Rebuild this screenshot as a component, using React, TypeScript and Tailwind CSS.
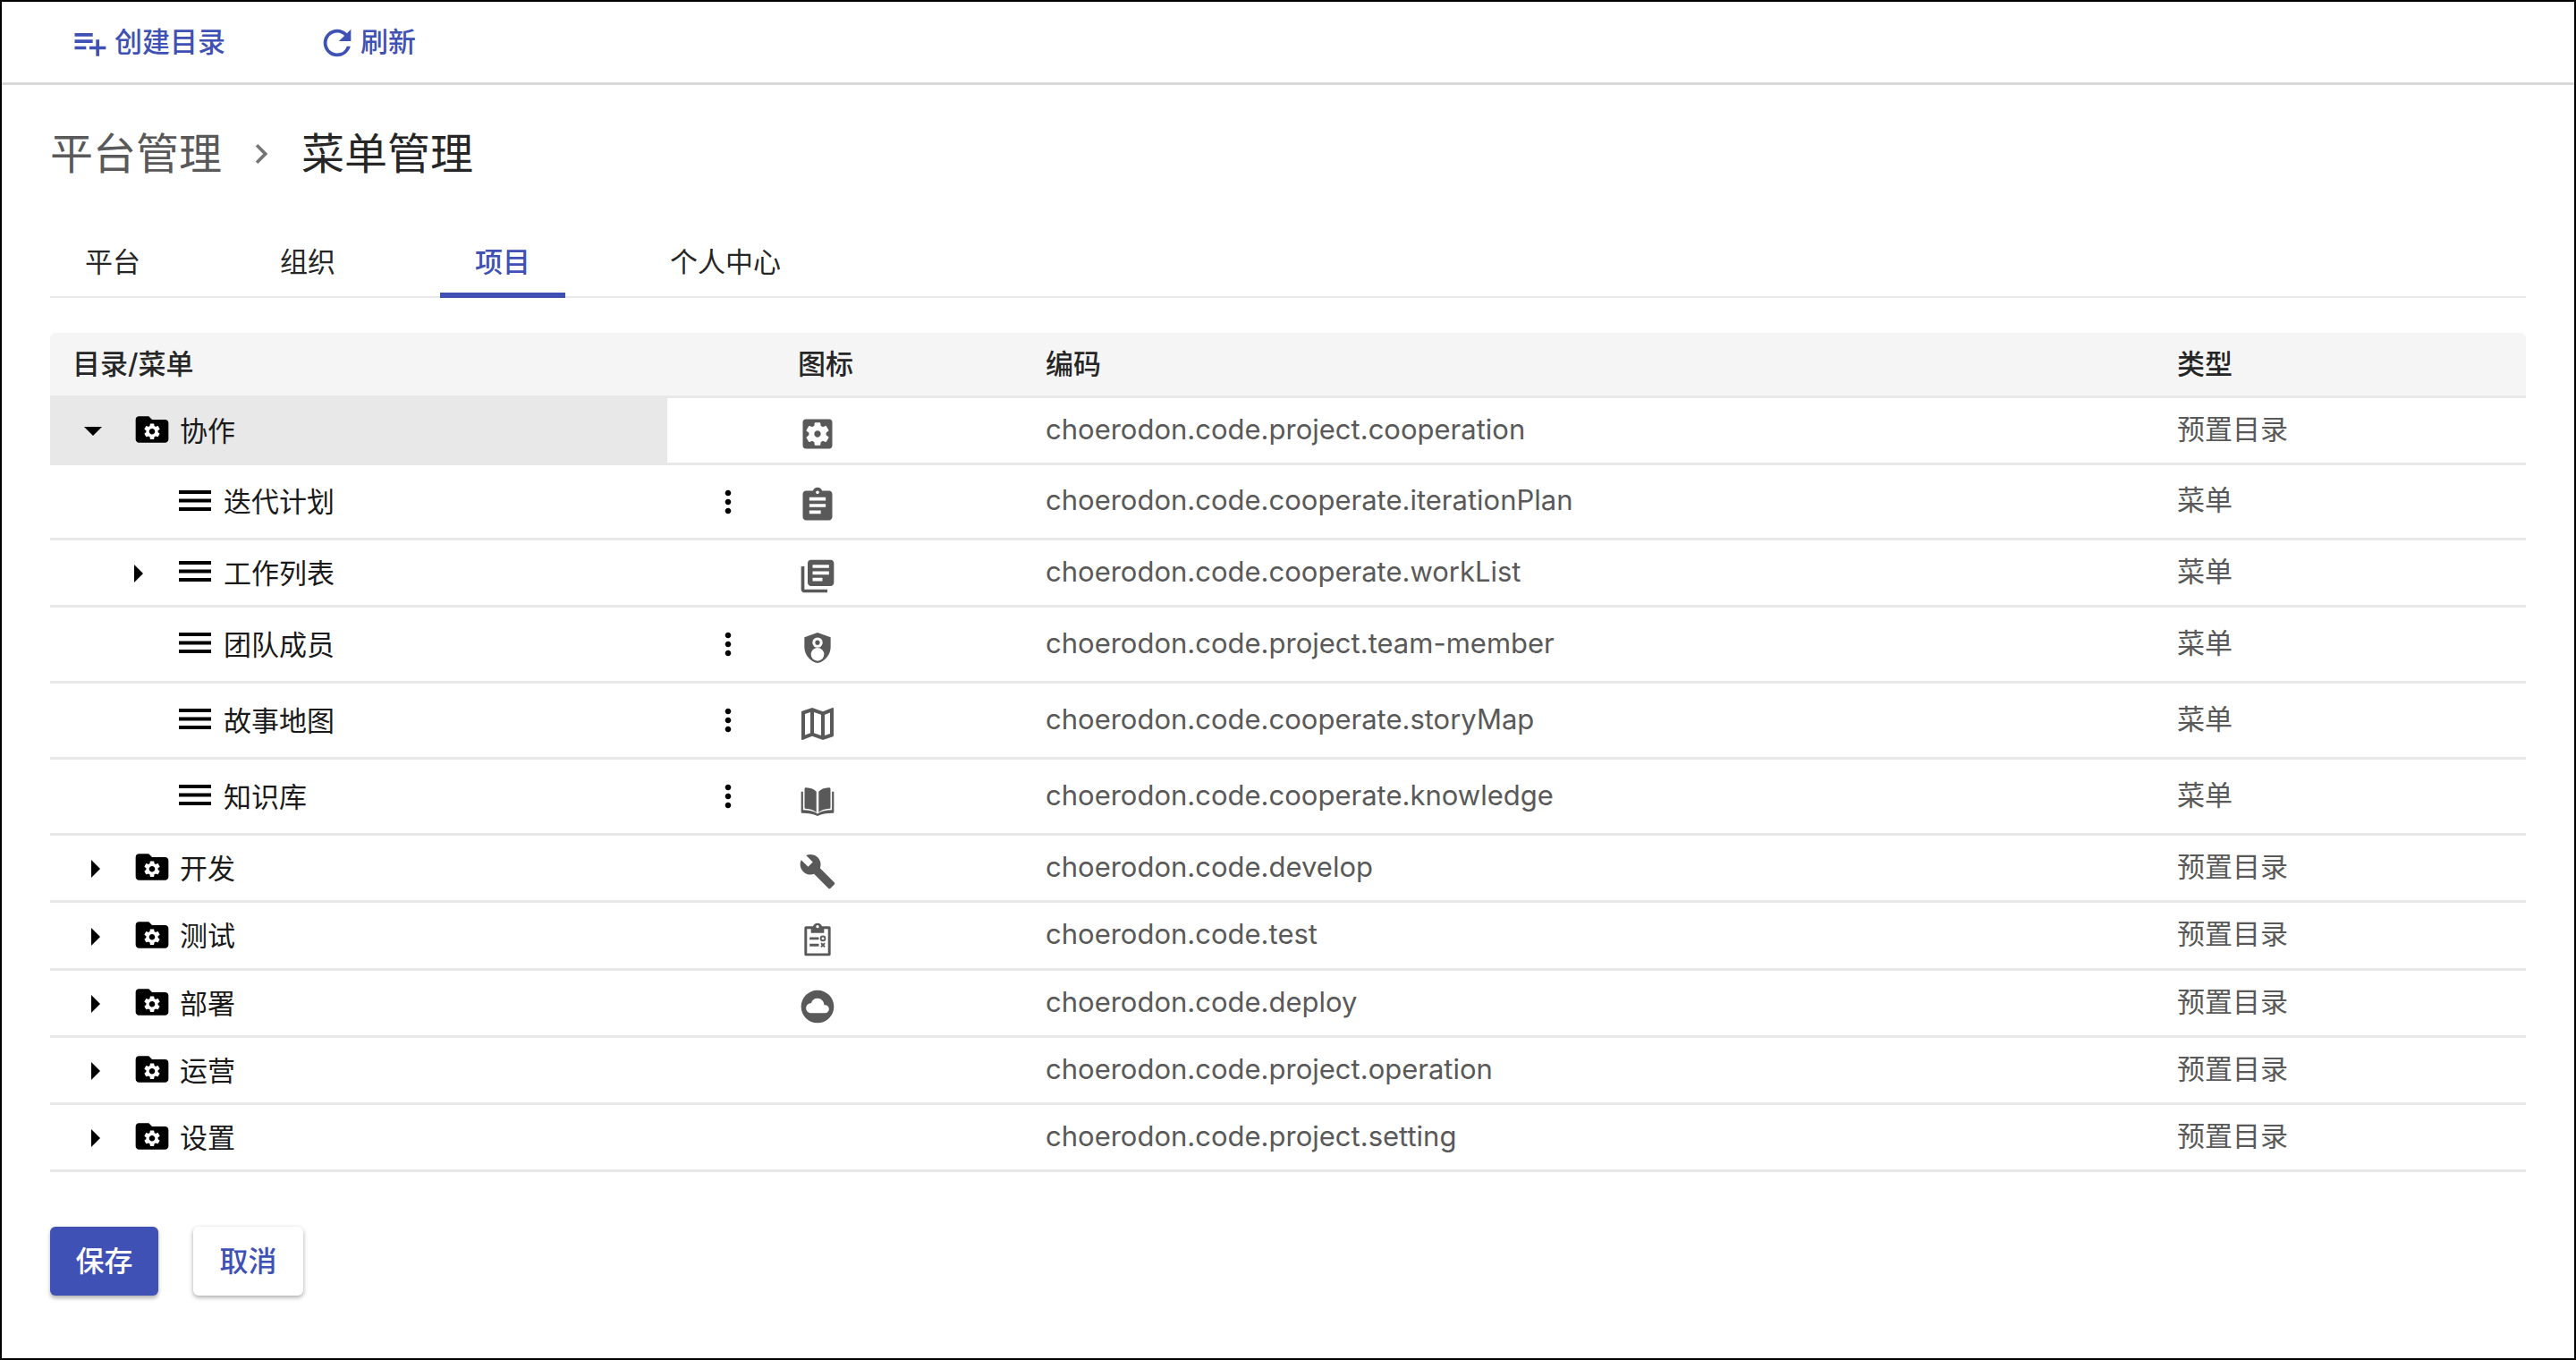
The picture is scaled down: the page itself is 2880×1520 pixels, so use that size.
import type { ReactNode } from 'react';
import {
  MdArrowDropDown,
  MdArrowRight,
  MdAssignment,
  MdBuild,
  MdChevronRight,
  MdCloudCircle,
  MdLibraryBooks,
  MdMoreVert,
  MdOutlineMap,
  MdPlaylistAdd,
  MdRefresh,
  MdSettingsApplications,
} from 'react-icons/md';

const GEAR =
  'M19.14 12.94c.04-.3.06-.61.06-.94 0-.32-.02-.64-.07-.94l2.03-1.58c.18-.14.23-.41.12-.61l-1.92-3.32c-.12-.22-.37-.29-.59-.22l-2.39.96c-.5-.38-1.03-.7-1.62-.94l-.36-2.54c-.04-.24-.24-.41-.48-.41h-3.84c-.24 0-.43.17-.47.41l-.36 2.54c-.59.24-1.13.57-1.62.94l-2.39-.96c-.22-.08-.47 0-.59.22L2.74 8.87c-.12.21-.08.47.12.61l2.03 1.58c-.05.3-.09.63-.09.94s.02.64.07.94l-2.03 1.58c-.18.14-.23.41-.12.61l1.92 3.32c.12.22.37.29.59.22l2.39-.96c.5.38 1.03.7 1.62.94l.36 2.54c.05.24.24.41.48.41h3.84c.24 0 .44-.17.47-.41l.36-2.54c.59-.24 1.13-.56 1.62-.94l2.39.96c.22.08.47 0 .59-.22l1.92-3.32c.12-.22.07-.47-.12-.61l-2.01-1.58zM12 15.6c-1.98 0-3.6-1.62-3.6-3.6s1.62-3.6 3.6-3.6 3.6 1.62 3.6 3.6-1.62 3.6-3.6 3.6z';

const FolderGear = () => (
  <svg viewBox="0 0 24 24" className="w-[44px] h-[44px] shrink-0 text-black -mt-[2px]">
    <path fill="currentColor" d="M10 4H4c-1.100 0-2 .9-2 2v12c0 1.100.9 2 2 2h16c1.100 0 2-.9 2-2V8c0-1.100-.9-2-2-2h-8l-2-2z" />
    <path fill="#fff" transform="translate(12 13.2) scale(.5) translate(-12 -12)" d={GEAR} />
  </svg>
);

const MenuLines = () => (
  <svg viewBox="0 0 36 23" className="w-[36px] h-[23px] text-black">
    <rect y="0" width="36" height="4" fill="currentColor" />
    <rect y="9.500" width="36" height="4" fill="currentColor" />
    <rect y="19" width="36" height="4" fill="currentColor" />
  </svg>
);

const ShieldPerson = () => (
  <svg viewBox="0 0 24 24" className="w-[44px] h-[44px]">
    <path fill="#595959" d="M12 2.700 4 5.600v5.800c0 4.700 3.300 8.900 8 9.900 4.700-1 8-5.200 8-9.900V5.600l-8-2.900z" />
    <circle cx="12" cy="8.800" r="3.100" fill="#fff" />
    <circle cx="12" cy="8.800" r="1.400" fill="#595959" />
    <circle cx="12" cy="16" r="4" fill="#fff" />
  </svg>
);

const ClipboardTest = () => (
  <svg viewBox="0 0 24 24" className="w-[44px] h-[44px]" fill="none">
    <path fill="#595959" d="M19 4h-4.200C14.400 2.800 13.300 2 12 2s-2.400.8-2.800 2H5c-.6 0-1 .4-1 1v16c0 .6.400 1 1 1h14c.6 0 1-.4 1-1V5c0-.6-.4-1-1-1zM12 3.300c.5 0 .9.400.9.900s-.4.900-.9.900-.9-.4-.9-.9.400-.9.900-.9zM18.400 20.400H5.600V5.600H8V8h8V5.600h2.400v14.800z" />
    <path fill="#595959" d="M7.200 10.600h5.600v1.600H7.200zM7.200 14.600h5.600v1.600H7.200z" />
    <circle cx="15.300" cy="11.400" r="1.300" stroke="#595959" strokeWidth="1" />
    <path stroke="#595959" strokeWidth="1" d="m14.200 14.300 2.200 2.200m0-2.200-2.200 2.200" />
  </svg>
);

const OpenBook = () => (
  <svg viewBox="0 0 24 24" className="w-[44px] h-[44px]" fill="#595959">
    <path d="M11.300 7C10 5.500 7.900 4.600 5 4.500c-.5 0-.9.300-.9.800v11.300c0 .4.300.7.700.7 2.800.1 5 .9 6.500 2.300V7zM12.700 7c1.300-1.500 3.400-2.400 6.300-2.500.5 0 .9.300.9.800v11.300c0 .4-.3.700-.7.700-2.800.1-5 .9-6.500 2.300V7z" />
    <path d="M2 7h1.200v11.200c3.600 0 6.600.7 8.800 2.200 2.200-1.500 5.200-2.200 8.800-2.200V7H22v12.300c0 .4-.3.700-.7.700-3.700 0-6.700.4-9.300 1.800C9.400 20.400 6.400 20 2.700 20c-.4 0-.7-.3-.7-.7V7z" />
  </svg>
);

const TreeRow = ({ label, level, open, arrow, height, more, icon, code, type }: {
  label: string;
  level: number;
  open?: boolean;
  arrow?: boolean;
  height: string;
  more?: boolean;
  icon?: ReactNode;
  code: string;
  type: string;
}) => (
  <div className={`grid grid-cols-[690px_146px_277px_1265px_1fr] items-stretch border-b-[3px] border-[#e8e8e8] ${height}`}>
    <div className={`flex items-center text-[31px] text-[#1a1a1a] ${open ? 'bg-[#e8e8e8]' : ''} ${level === 0 ? 'pl-[24px]' : 'pl-[74px]'}`}>
      <span className="w-[48px] h-[48px] shrink-0 text-black">
        {arrow && (open
          ? <MdArrowDropDown className="w-[48px] h-[48px]" />
          : <MdArrowRight className={`w-[48px] h-[48px] mt-[1px] ${level === 0 ? 'ml-[2px]' : ''}`} />)}
      </span>
      {level === 0 ? (
        <span className="ml-[20px] mr-[9px] flex items-center"><FolderGear /></span>
      ) : (
        <span className="ml-[22px] mr-[14px] flex items-center -mt-[3px]"><MenuLines /></span>
      )}
      <span className="mt-[2px]">{label}</span>
    </div>
    <div className="flex items-center pl-[48px]">
      {more && <MdMoreVert className="w-[40px] h-[40px] text-black" />}
    </div>
    <div className="flex items-center pt-[8px] text-[#595959]">{icon}</div>
    <div className="flex items-center text-[31px] text-[#595959] -mt-[2px]">{code}</div>
    <div className="flex items-center text-[31px] text-[#595959] -mt-[2px]">{type}</div>
  </div>
);

export default function App() {
  return (
    <div className="w-[2880px] h-[1520px] border-2 border-black bg-white overflow-hidden font-['Inter','Noto_Sans_CJK_SC',sans-serif]">
      <div className="flex items-center h-[93px] border-b-[3px] border-[#d9d9d9] pl-[76px] pt-[1px] text-[31px] font-medium text-[#3f51b5]">
        <button className="flex items-center gap-[6px]">
          <MdPlaylistAdd className="w-[44px] h-[44px]" />
          创建目录
        </button>
        <button className="flex items-center gap-[3px] ml-[102px]">
          <MdRefresh className="w-[46px] h-[46px]" />
          刷新
        </button>
      </div>

      <div className="px-[54px]">
        <div className="flex items-center h-[155px] pb-[2px] text-[48px]">
          <span className="text-[#595959]">平台管理</span>
          <MdChevronRight className="w-[44px] h-[44px] ml-[22px] mr-[23px] text-[#757575]" />
          <span className="text-[#262626]">菜单管理</span>
        </div>

        <div className="flex gap-[78px] border-b-[2px] border-[#e8e8e8] h-[83px] text-[31px] text-[#262626]">
          <div className="px-[39px] pt-[20px]">平台</div>
          <div className="px-[39px] pt-[20px]">组织</div>
          <div className="px-[39px] pt-[20px] h-[83px] border-b-[6px] border-[#3f51b5] text-[#3f51b5] font-medium">项目</div>
          <div className="px-[39px] pt-[20px]">个人中心</div>
        </div>

        <div className="mt-[39px]">
          <div className="grid grid-cols-[836px_277px_1265px_1fr] items-center h-[73px] bg-[#f5f5f5] rounded-t-[6px] border-b-[3px] border-[#e8e8e8] text-[31px] font-medium text-[#262626]">
            <div className="pl-[25px]">目录/菜单</div>
            <div>图标</div>
            <div>编码</div>
            <div>类型</div>
          </div>

          <TreeRow label="协作" level={0} arrow open height="h-[75px]" icon={<MdSettingsApplications className="w-[44px] h-[44px]" />} code="choerodon.code.project.cooperation" type="预置目录" />
          <TreeRow label="迭代计划" level={1} more height="h-[84px]" icon={<MdAssignment className="w-[44px] h-[44px]" />} code="choerodon.code.cooperate.iterationPlan" type="菜单" />
          <TreeRow label="工作列表" level={1} arrow height="h-[75px]" icon={<MdLibraryBooks className="w-[44px] h-[44px]" />} code="choerodon.code.cooperate.workList" type="菜单" />
          <TreeRow label="团队成员" level={1} more height="h-[85px]" icon={<ShieldPerson />} code="choerodon.code.project.team-member" type="菜单" />
          <TreeRow label="故事地图" level={1} more height="h-[85px]" icon={<MdOutlineMap className="w-[48px] h-[48px] -ml-[2px]" />} code="choerodon.code.cooperate.storyMap" type="菜单" />
          <TreeRow label="知识库" level={1} more height="h-[85px]" icon={<OpenBook />} code="choerodon.code.cooperate.knowledge" type="菜单" />
          <TreeRow label="开发" level={0} arrow height="h-[75px]" icon={<MdBuild className="w-[42px] h-[42px] ml-[1px]" />} code="choerodon.code.develop" type="预置目录" />
          <TreeRow label="测试" level={0} arrow height="h-[76px]" icon={<ClipboardTest />} code="choerodon.code.test" type="预置目录" />
          <TreeRow label="部署" level={0} arrow height="h-[75px]" icon={<MdCloudCircle className="w-[44px] h-[44px]" />} code="choerodon.code.deploy" type="预置目录" />
          <TreeRow label="运营" level={0} arrow height="h-[75px]" code="choerodon.code.project.operation" type="预置目录" />
          <TreeRow label="设置" level={0} arrow height="h-[75px]" code="choerodon.code.project.setting" type="预置目录" />
        </div>

        <div className="flex gap-[39px] mt-[61px] text-[32px] font-medium">
          <button className="w-[121px] h-[77px] rounded-[6px] bg-[#3f51b5] text-white shadow-[0_3px_4px_rgba(0,0,0,0.3)]">保存</button>
          <button className="w-[123px] h-[77px] rounded-[6px] bg-white text-[#3f51b5] shadow-[0_2px_5px_rgba(0,0,0,0.35)]">取消</button>
        </div>
      </div>
    </div>
  );
}
